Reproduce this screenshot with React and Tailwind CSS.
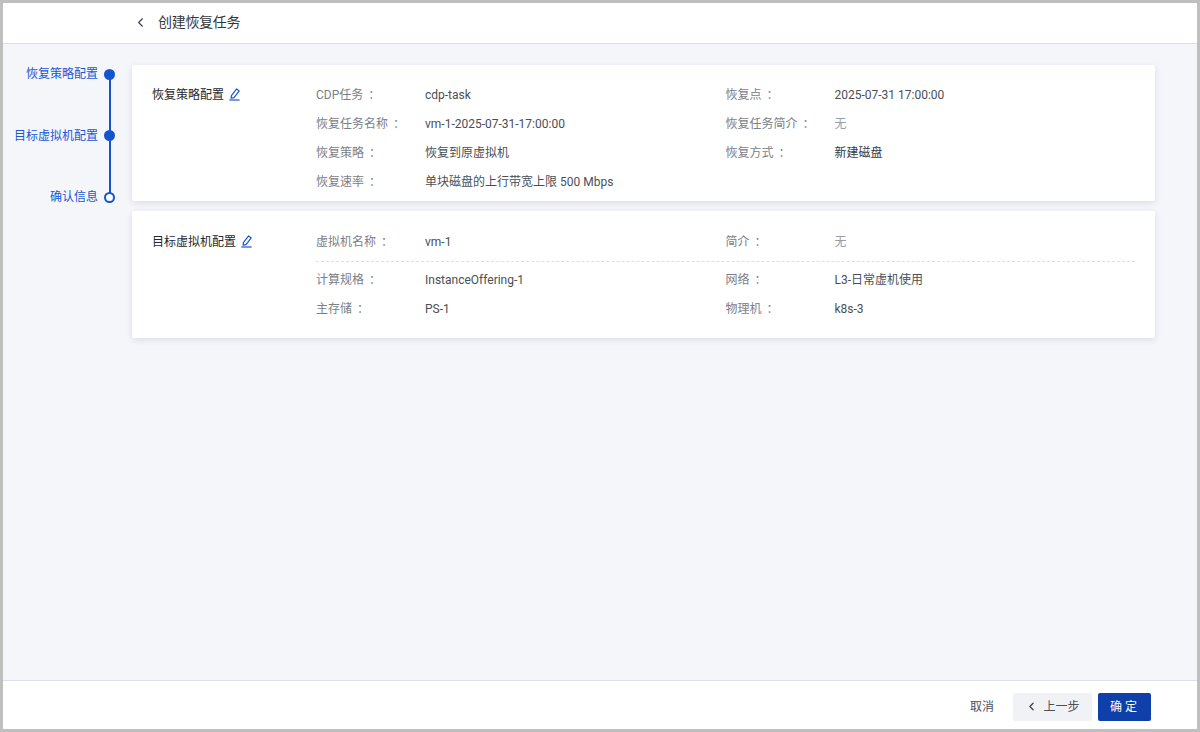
import React from 'react';
import { ChevronLeft } from 'lucide-react';

const PenIcon = () => (
  <svg width="12" height="13" viewBox="0 0 12 13" fill="none" stroke="#1a56d6" strokeWidth="1.2" className="mb-[1px] shrink-0">
    <path d="M2.4 7.6 L7.6 0.9 L10.2 2.9 L5 9.6 L2.1 10.2 Z" strokeLinejoin="round" />
    <path d="M0.3 12 H10.6" />
  </svg>
);

const Field = ({ label, value, muted, strong }) => (
  <div className="flex h-[29px] items-center">
    <div className="flex w-[109px] shrink-0 text-[#7b8088]">
      <span>{label}</span>
      <span className="ml-[5px]">：</span>
    </div>
    <div className={muted ? 'text-[#9a9ea5]' : strong ? 'text-[#33373d]' : 'text-[#4a4f56]'}>{value}</div>
  </div>
);

const Step = ({ label, filled, last }) => (
  <div className={`flex justify-end gap-[6px] ${last ? 'items-center' : 'h-[61.5px] items-start'}`}>
    <span className="text-[12px] leading-[18px] text-[#1a56d6]">{label}</span>
    <div className="relative flex h-[18px] w-[11px] items-center justify-center">
      <div className={filled ? 'h-[11px] w-[11px] rounded-full bg-[#1554cf]' : 'h-[11px] w-[11px] rounded-full border-2 border-[#1554cf] bg-white'} />
      {!last && <div className="absolute left-[4.5px] top-[14px] h-[58px] w-[2px] bg-[#1554cf]" />}
    </div>
  </div>
);

const Card = ({ title, top, children }) => (
  <div className={`flex rounded-[2px] bg-white pl-[20px] pr-[20px] shadow-[0_2px_6px_rgba(30,40,70,0.12)] ${top}`}>
    <div className="flex h-[29px] w-[164px] shrink-0 items-center gap-[5px] text-[12px] text-[#24272c]">
      <span>{title}</span>
      <PenIcon />
    </div>
    <div className="min-w-0 flex-1">{children}</div>
  </div>
);

export default function App() {
  return (
    <div
      className="flex h-[732px] w-[1200px] flex-col overflow-hidden border-[3px] border-[#bfbfbf] bg-[#f4f6fa] text-[12px]"
      style={{ fontFamily: 'Roboto, "Noto Sans CJK SC", sans-serif' }}
    >
      <header className="flex h-[41px] shrink-0 items-center border-b border-[#dcdfe6] bg-white pb-[2px] pl-[130px]">
        <ChevronLeft size={15} strokeWidth={1.8} className="text-[#3a3f46]" />
        <h1 className="ml-[10px] text-[14px] font-normal tracking-[-0.3px] text-[#33373d]">创建恢复任务</h1>
      </header>

      <main className="flex min-h-0 flex-1 pr-[42px] pt-[21px]">
        <nav className="w-[112px] shrink-0">
          <Step label="恢复策略配置" filled />
          <Step label="目标虚拟机配置" filled />
          <Step label="确认信息" last />
        </nav>
        <div className="ml-[17px] flex min-w-0 flex-1 flex-col gap-[10px]">
          <Card title="恢复策略配置" top="pt-[15px]">
            <div className="grid grid-cols-2 pb-[5px]">
              <Field label="CDP任务" value="cdp-task" />
              <Field label="恢复点" value="2025-07-31 17:00:00" />
              <Field label="恢复任务名称" value="vm-1-2025-07-31-17:00:00" />
              <Field label="恢复任务简介" value="无" muted />
              <Field label="恢复策略" value="恢复到原虚拟机" />
              <Field label="恢复方式" value="新建磁盘" strong />
              <Field label="恢复速率" value="单块磁盘的上行带宽上限 500 Mbps" />
            </div>
          </Card>
          <Card title="目标虚拟机配置" top="pt-[16px]">
            <div className="pb-[15px]">
              <div className="grid grid-cols-2 border-b border-dashed border-[#dcdfe6] pb-[5px]">
                <Field label="虚拟机名称" value="vm-1" />
                <Field label="简介" value="无" muted />
              </div>
              <div className="grid grid-cols-2 pt-[3px]">
                <Field label="计算规格" value="InstanceOffering-1" />
                <Field label="网络" value="L3-日常虚机使用" />
                <Field label="主存储" value="PS-1" />
                <Field label="物理机" value="k8s-3" />
              </div>
            </div>
          </Card>
        </div>
      </main>

      <footer className="flex h-[49px] shrink-0 items-center justify-end border-t border-[#dcdfe6] bg-white pr-[46px] pt-[3px]">
        <button className="mr-[19px] text-[12px] text-[#4b5058]">取消</button>
        <button className="mr-[6px] flex h-[28px] w-[79px] items-center justify-center gap-[5px] rounded-[2px] bg-[#f1f2f6] text-[12px] text-[#4b5058]">
          <ChevronLeft size={13} strokeWidth={2.2} className="text-[#3a3f46]" />
          上一步
        </button>
        <button className="h-[28px] w-[53px] rounded-[2px] bg-[#0f3fa8] pl-[1px] text-[12px] tracking-[3px] text-white">确定</button>
      </footer>
    </div>
  );
}
